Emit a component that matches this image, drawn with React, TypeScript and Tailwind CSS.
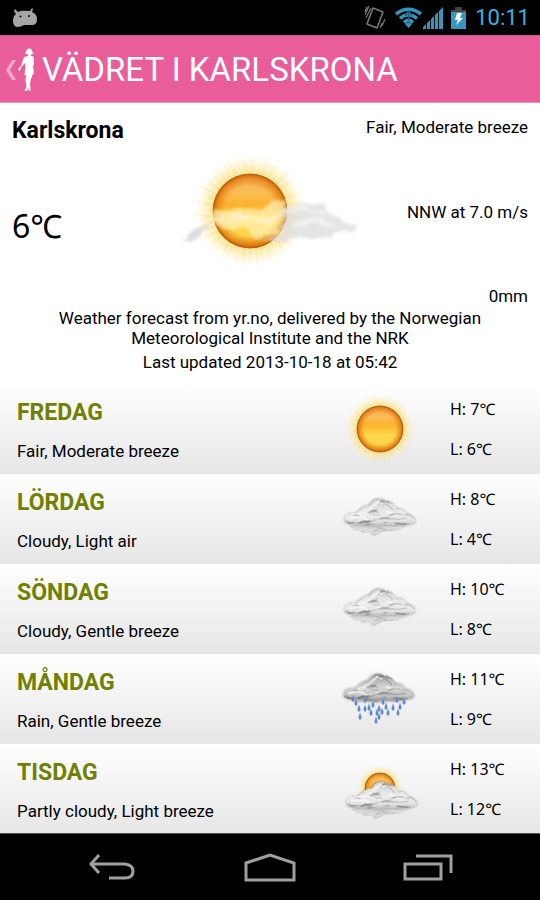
import type { ReactNode } from "react";

type Kind = "sun" | "cloud" | "rain" | "partly";

const days: { name: string; text: string; high: string; low: string; kind: Kind }[] = [
  { name: "FREDAG", text: "Fair, Moderate breeze", high: "7℃", low: "6℃", kind: "sun" },
  { name: "LÖRDAG", text: "Cloudy, Light air", high: "8℃", low: "4℃", kind: "cloud" },
  { name: "SÖNDAG", text: "Cloudy, Gentle breeze", high: "10℃", low: "8℃", kind: "cloud" },
  { name: "MÅNDAG", text: "Rain, Gentle breeze", high: "11℃", low: "9℃", kind: "rain" },
  { name: "TISDAG", text: "Partly cloudy, Light breeze", high: "13℃", low: "12℃", kind: "partly" },
];

const drops = [
  [37, 37], [40, 41], [43, 47], [44, 55], [49, 38], [49, 47], [53, 46], [57, 43], [55, 51], [63, 47], [61, 51],
  [67, 40], [66, 50], [70, 45], [72, 51], [77, 46], [81, 38], [82, 51], [84, 45], [88, 40], [63, 55], [60, 59],
];

// Shared gradients and filters, referenced by id from every weather drawing
function Defs() {
  return (
    <svg className="absolute size-0" aria-hidden="true">
      <defs>
        <linearGradient id="sunFill" x1="0" y1="0" x2="0" y2="1">
          <stop offset="0" stopColor="#f3b05a" />
          <stop offset="0.25" stopColor="#fbbd55" />
          <stop offset="0.42" stopColor="#fab32f" />
          <stop offset="0.65" stopColor="#fed94b" />
          <stop offset="0.85" stopColor="#fbd24c" />
          <stop offset="1" stopColor="#e99722" />
        </linearGradient>
        <radialGradient id="sunEdge">
          <stop offset="0.68" stopColor="#e07808" stopOpacity="0" />
          <stop offset="0.9" stopColor="#e07808" stopOpacity="0.7" />
          <stop offset="1" stopColor="#c85a02" />
        </radialGradient>
        <radialGradient id="sunGlow">
          <stop offset="0.5" stopColor="#fbcf4d" stopOpacity="0.9" />
          <stop offset="0.75" stopColor="#fde68f" stopOpacity="0.6" />
          <stop offset="1" stopColor="#fff3c0" stopOpacity="0" />
        </radialGradient>
        <linearGradient id="cloudFill" x1="0" y1="0" x2="0" y2="1">
          <stop offset="0" stopColor="#d6d6d6" />
          <stop offset="0.55" stopColor="#ececec" />
          <stop offset="0.8" stopColor="#e2e2e2" />
          <stop offset="1" stopColor="#b4b4b4" />
        </linearGradient>
        <linearGradient id="rainFill" x1="0" y1="0" x2="0" y2="1">
          <stop offset="0" stopColor="#a0a0a0" />
          <stop offset="0.5" stopColor="#d6d6d6" />
          <stop offset="0.8" stopColor="#c0c0c0" />
          <stop offset="1" stopColor="#8c8c8c" />
        </linearGradient>
        <filter id="soft" x="-20%" y="-20%" width="140%" height="140%">
          <feGaussianBlur stdDeviation="1" />
        </filter>
        <filter id="wisp" x="-10%" y="-20%" width="120%" height="140%">
          <feTurbulence type="fractalNoise" baseFrequency="0.04 0.1" numOctaves="4" seed="4" result="noise" />
          <feDisplacementMap in="SourceGraphic" in2="noise" scale="14" xChannelSelector="R" yChannelSelector="G" result="shape" />
          <feGaussianBlur in="shape" stdDeviation="1.8" />
        </filter>
        {/* noise used twice: ragged outline, then relief shading multiplied into the fill */}
        <filter id="puff" x="-10%" y="-15%" width="120%" height="130%" colorInterpolationFilters="sRGB">
          <feTurbulence type="fractalNoise" baseFrequency="0.09 0.14" numOctaves="3" seed="21" result="noise" />
          <feDisplacementMap in="SourceGraphic" in2="noise" scale="3" xChannelSelector="R" yChannelSelector="G" result="shape" />
          <feColorMatrix in="noise" type="matrix" values="0 0 0 0 0 0 0 0 0 0 0 0 0 0 0 1 0 0 0 0" result="height" />
          <feDiffuseLighting in="height" surfaceScale="2" diffuseConstant="1.12" lightingColor="#ffffff" result="light">
            <feDistantLight azimuth="250" elevation="66" />
          </feDiffuseLighting>
          <feComposite in="shape" in2="light" operator="arithmetic" k1="1" result="lit" />
          <feComposite in="lit" in2="shape" operator="in" result="cut" />
          <feGaussianBlur in="cut" stdDeviation="0.5" />
        </filter>
      </defs>
    </svg>
  );
}

function Sun({ cx, cy, r }: { cx: number; cy: number; r: number }) {
  const rays = Array.from({ length: 72 }, (_, i) => {
    const angle = (i * Math.PI) / 36 + ((i * 7) % 5) * 0.012;
    const length = r * (1.25 + ((i * 37) % 11) * 0.04);
    const half = 0.022;
    return `M${cx + r * Math.cos(angle - half)} ${cy + r * Math.sin(angle - half)}L${cx + length * Math.cos(angle)} ${cy + length * Math.sin(angle)}L${cx + r * Math.cos(angle + half)} ${cy + r * Math.sin(angle + half)}Z`;
  }).join("");

  return (
    <g>
      <circle cx={cx} cy={cy} r={r * 1.5} fill="url(#sunGlow)" />
      <path d={rays} fill="#f9d258" opacity="0.35" />
      <circle cx={cx} cy={cy} r={r} fill="url(#sunFill)" />
      <circle cx={cx} cy={cy} r={r} fill="url(#sunEdge)" />
      <circle cx={cx} cy={cy} r={r} fill="none" stroke="#9c5a18" strokeWidth="1" opacity="0.75" />
    </g>
  );
}

function Cloud({ dark = false }: { dark?: boolean }) {
  return (
    <g>
      <path
        d="M34 28C31 22 37 18 43 19C49 15 50 12 56 11C60 4 68 3 73 8C77 7 80 11 83 14C88 14 91 17 92 19C98 20 103 25 99 29C88 33 73 31 65 33C56 32 43 33 34 28Z"
        fill="#888888"
        filter="url(#soft)"
        opacity="0.6"
      />
      <g filter="url(#puff)">
        {!dark && <path d="M37 32Q49 29 63 31T97 30Q86 34 84 36Q68 36 62 41Q56 39 57 37Q48 38 48 36Q40 36 37 32Z" fill="#cccccc" opacity="0.75" />}
        <path
          d="M34 28C31 21 38 18 44 19C50 15 51 12 57 11C61 4 68 4 73 8C78 7 81 11 84 15C89 14 91 18 93 20C98 21 102 25 99 28C88 32 73 30 65 32C56 31 43 32 34 28Z"
          fill={dark ? "url(#rainFill)" : "url(#cloudFill)"}
        />
        <path d="M47 20Q55 19 60 13T70 11M74 17Q80 21 88 20M38 24Q46 21 54 24T70 21" fill="none" stroke="#ffffff" strokeWidth="2" opacity="0.6" />
        <path d="M59 27Q68 22 78 24T92 23M36 26Q42 30 53 27M69 10Q75 11 79 16" fill="none" stroke="#888888" strokeWidth="1" opacity={dark ? "0.7" : "0.4"} />
      </g>
    </g>
  );
}

function DayIcon({ kind }: { kind: Kind }) {
  return (
    <svg viewBox="14 0 106 72" className="h-18 w-full" role="img" aria-label={kind}>
      {kind === "sun" && <Sun cx={64} cy={37} r={23} />}
      {kind === "cloud" && <g transform="translate(-7 11) scale(1.06)"><Cloud /></g>}
      {kind === "rain" && (
        <g>
          <g transform="translate(-8 6) scale(1.06)"><Cloud dark /></g>
          {drops.map(([x, y]) => (
            <path key={`${x}-${y}`} d={`M${x} ${y - 4}Q${x - 2} ${y} ${x - 1} ${y + 2}Q${x} ${y + 3} ${x + 1} ${y + 2}Q${x + 2} ${y} ${x} ${y - 4}Z`} fill="#4f83d6" stroke="#a3abbb" strokeWidth="0.4" />
          ))}
        </g>
      )}
      {kind === "partly" && (
        <g>
          <Sun cx={64} cy={36} r={15} />
          <g transform="translate(-5 24) scale(1.06)"><Cloud /></g>
        </g>
      )}
    </svg>
  );
}

function CurrentIcon() {
  return (
    <svg viewBox="0 0 200 124" className="h-31 w-50" role="img" aria-label="Fair">
      <Sun cx={80} cy={66} r={37} />
      <g filter="url(#wisp)">
        <path d="M40 66Q56 64 76 67Q91 64 104 56L117 52L117 66Q114 86 102 90L84 96L74 82Q56 91 45 81Z" fill="#fff2b8" opacity="0.7" />
        <path d="M45 74Q68 68 87 75T114 67" fill="none" stroke="#ffffff" strokeWidth="4" opacity="0.4" />
        <path d="M114 64Q131 56 151 59Q160 65 168 73Q179 80 188 80Q174 89 152 92Q131 97 92 96Q110 91 115 79Z" fill="#dddddd" opacity="0.8" />
        <path d="M116 68Q141 58 158 70M124 80Q149 72 164 82" fill="none" stroke="#ffffff" strokeWidth="5" opacity="0.5" />
        <path d="M12 94Q24 83 39 81Q33 90 16 97Z" fill="#d5d5d5" opacity="0.8" />
      </g>
    </svg>
  );
}

function StatusBar() {
  return (
    <div className="flex h-[35px] shrink-0 items-center justify-between bg-black pr-[10px] pl-3">
      <svg viewBox="0 0 26 20" className="h-5 w-[26px]" fill="#a5a5a5">
        <path d="M3 1L6 4Q9 2 18 3L20 0L21 1L20 4Q25 6 25 11Q25 17 20 17L12 17Q9 19 5 19Q1 18 1 13Q1 8 4 6L2 3Z" />
        <circle cx="8.5" cy="8.5" r="1" fill="#000000" />
        <circle cx="17" cy="8" r="1" fill="#000000" />
      </svg>
      <div className="flex items-center">
        <svg viewBox="0 0 22 26" className="mr-2 h-[26px] w-[22px]" fill="none" stroke="#777777" strokeWidth="1.2">
          <path d="M9 3L19 7L13 23L3 19Z" strokeWidth="1.6" strokeLinejoin="round" />
          <path d="M1 10L5 1M2 13L7 3M18 21L21 14M16 23L18 18M1 7L3 2" />
        </svg>
        <svg viewBox="0 0 29 22" className="h-[22px] w-[29px]" fill="none" stroke="#3397c0" strokeWidth="3.5">
          <path d="M2 7Q14.500 -2.500 27 7M6 11.500Q14.500 4 23 11.500M10 15.500Q14.500 11 19 15.500" />
          <path d="M11 17Q14.500 14 18 17L14.500 21Z" fill="#3397c0" stroke="none" />
          <path d="M11 9L14.500 4L18 9M14.500 6V14" stroke="#225f7b" strokeWidth="1.500" />
        </svg>
        <svg viewBox="0 0 20 22" className="mr-2 h-[22px] w-5" fill="#3397c0">
          <path d="M0 22V20L3 17V22ZM4 22V16L7 13V22ZM8 22V12L11 9V22ZM12 22V8L15 5V22ZM16 22V4L20 0V22Z" />
        </svg>
        <svg viewBox="0 0 15 22" className="mr-[9px] h-[22px] w-[15px]">
          <path d="M4 0H11V3H15V7H0V3H4Z" fill="#444444" />
          <path d="M0 5H15V22H0Z" fill="#3397c0" />
          <path d="M6 6H11L9 11H12L5 18L7 13H4Z" fill="#ffffff" />
        </svg>
        <span className="text-[22px] leading-8 text-[#33b5e5]">10:11</span>
      </div>
    </div>
  );
}

function NavButton({ label, children }: { label: string; children: ReactNode }) {
  return (
    <button type="button" aria-label={label} className="flex flex-1 items-center justify-center">
      <svg viewBox="0 0 54 30" className="h-[30px] w-[54px]" fill="none" stroke="#a0a0a0" strokeWidth="3">
        {children}
      </svg>
    </button>
  );
}

export default function App() {
  return (
    <div className="flex h-screen flex-col bg-white font-[Roboto,'Noto_Sans',sans-serif] text-black">
      <Defs />
      <StatusBar />
      <header className="flex h-[68px] shrink-0 items-center border-y border-t-[#d6568c] border-b-[#ef8db5] bg-[#e95d9a] pt-[2px] pl-[6px] text-white">
        <button type="button" aria-label="Back" className="flex items-center">
          <svg viewBox="0 0 10 20" className="h-5 w-[10px]" fill="#f5acca">
            <path d="M6 0H10L4 10L10 20H6L0 10Z" />
          </svg>
          <svg viewBox="0 0 18 44" className="mx-[2px] h-11 w-[18px]" fill="#ffffff">
            <path d="M9 1.500Q10 0 12.500 0.500Q14.500 2 14.500 4.500L16 5.500L13 6.500V8L15.500 8.500L16 16L15 18L16 25L14.500 27L13 31L12 36L12.500 40V43H11L10.500 40L9 43H6.500L8.500 38L7.500 33L8 27H6.500L7.500 18L7 15L3 19.500L2 23L0.500 23V20.500L3 18L6 9L10 8V6.500L7 5.500Z" />
          </svg>
        </button>
        <h1 className="ml-1 text-[33px] leading-10">VÄDRET I KARLSKRONA</h1>
      </header>

      <main className="min-h-0 flex-1 overflow-y-auto [scrollbar-width:none]">
        <section className="grid h-[205px] grid-cols-[minmax(0,1fr)_200px_minmax(0,1fr)] px-3 pt-3">
          <div className="flex flex-col">
            <h2 className="text-[23px] leading-8 font-bold">Karlskrona</h2>
            <p className="mt-12 font-['Noto_Sans',sans-serif] text-[32px] leading-[62px]">6℃</p>
          </div>
          <div className="pt-[30px]">
            <CurrentIcon />
          </div>
          <div className="flex flex-col items-end justify-between text-[17px] leading-6 whitespace-nowrap">
            <p>Fair, Moderate breeze</p>
            <p>NNW at 7.0 m/s</p>
            <p>0mm</p>
          </div>
        </section>
        <section className="px-10 pb-3 text-center text-[17px] leading-5">
          <p>Weather forecast from yr.no, delivered by the Norwegian Meteorological Institute and the NRK</p>
          <p className="mt-1">Last updated 2013-10-18 at 05:42</p>
        </section>
        <ul>
          {days.map((day) => (
            <li key={day.name} className="grid h-[90px] grid-cols-[1fr_106px_104px] bg-linear-to-b from-white to-[#e6e6e6] pl-[17px] text-[17px]">
              <div className="pt-3">
                <h3 className="text-[23px] leading-[34px] font-bold text-[#708000]">{day.name}</h3>
                <p className="mt-2 leading-[26px]">{day.text}</p>
              </div>
              <div className="pt-2">
                <DayIcon kind={day.kind} />
              </div>
              <div className="pt-3 pl-[14px] font-['Noto_Sans',sans-serif] text-base leading-[26px]">
                <p>H: {day.high}</p>
                <p className="mt-[14px]">L: {day.low}</p>
              </div>
            </li>
          ))}
        </ul>
      </main>

      <nav className="flex h-[67px] shrink-0 border-t border-[#555555] bg-black px-8 pt-[2px]">
        <NavButton label="Back">
          <path d="M15 2L7 11L15 20M7 11H41Q49 12 49 18Q49 25 41 25H25" />
        </NavButton>
        <NavButton label="Home">
          <path d="M3 10L27 2L51 10V27H3Z" />
        </NavButton>
        <NavButton label="Recent apps">
          <path d="M3 11H39V26H3ZM14 3H49V20" />
        </NavButton>
      </nav>
    </div>
  );
}
